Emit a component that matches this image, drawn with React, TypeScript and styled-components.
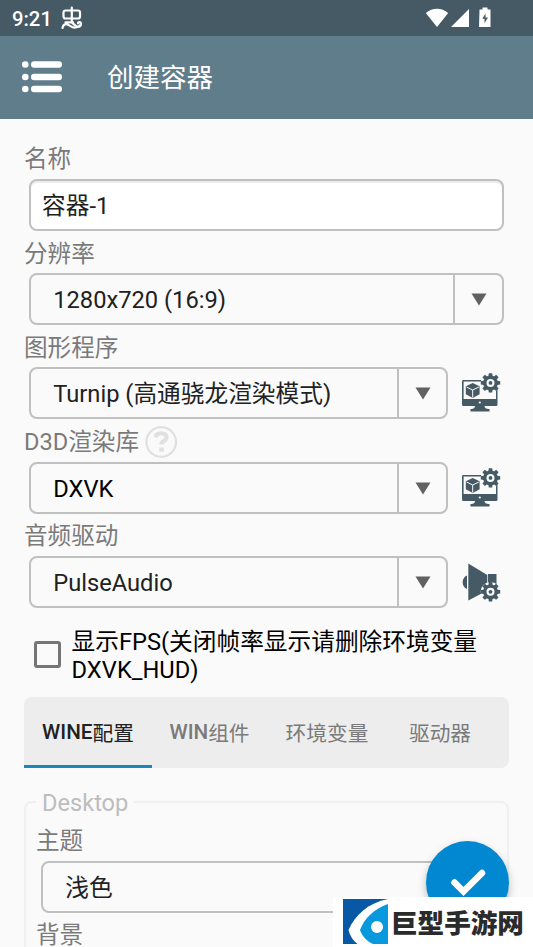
import React from "react";
import styled, { createGlobalStyle } from "styled-components";

const GlobalStyle = createGlobalStyle`
  * { box-sizing: border-box; }
  html, body { margin: 0; padding: 0; overflow: hidden; background: #fafafa; }
  body { font-family: Roboto, "Noto Sans CJK SC", sans-serif; }
`;

const Screen = styled.div`
  position: relative;
  width: 533px;
  height: 947px;
  overflow: hidden;
  background: #fafafa;
`;

const StatusBar = styled.div`
  height: 35.5px;
  padding: 0 40px 0 12px;
  display: flex;
  align-items: center;
  justify-content: space-between;
  background: #455a64;
  color: #fff;
`;

const StatusGroup = styled.div`
  display: flex;
  align-items: center;
`;

const Clock = styled.span`
  width: 49px;
  padding-top: 2px;
  font-size: 20.3px;
  font-weight: 500;
  line-height: 24px;
`;

const Header = styled.header`
  height: 83px;
  padding: 0 0 0 22px;
  display: flex;
  align-items: center;
  gap: 45px;
  background: #607d8b;
`;

const Title = styled.h1`
  margin: 0;
  padding-top: 1px;
  color: #fff;
  font-size: 26.5px;
  font-weight: 400;
  line-height: 36px;
`;

const Form = styled.main`
  padding: 26.4px 24px 0;
`;

const Field = styled.div`
  height: 94.25px;
`;

const Label = styled.div`
  height: 28px;
  display: flex;
  align-items: center;
  gap: 6px;
  padding-top: 1px;
  color: #7a7a7a;
  font-size: 23.6px;
  line-height: 28px;
`;

const ControlRow = styled.div`
  display: flex;
  align-items: center;
  margin: 6px 5px 0 4.5px;
`;

const Box = styled.div<{ $input?: boolean; $black?: boolean }>`
  flex: 1;
  height: 52px;
  display: flex;
  align-items: center;
  padding-left: ${(p) => (p.$input ? 11.5 : 22.7)}px;
  border: 2px solid #c0c0c0;
  border-radius: 8px;
  background: ${(p) => (p.$input ? "#fff" : "#fafafa")};
  box-shadow: ${(p) => (p.$input ? "inset 0 2px 0 #ececec" : "none")};
  color: ${(p) => (p.$black ? "#000" : "#212121")};
  font-size: 23.7px;
  line-height: 30px;
  white-space: nowrap;
`;

const Value = styled.span`
  flex: 1;
  padding-top: 2px;
`;

const Arrow = styled.span`
  width: 49.5px;
  align-self: stretch;
  display: flex;
  align-items: center;
  justify-content: center;
  padding: 1px 0 0 1px;
  border-left: 2px solid #c0c0c0;
`;

const IconSlot = styled.div`
  width: 56px;
  height: 52px;
  padding: 0 0 0 12.5px;
  display: flex;
  align-items: center;
`;

const CheckRow = styled.div`
  height: 80.5px;
  display: flex;
  align-items: center;
  padding: 0 0 0 10px;
  gap: 10.5px;
`;

const Checkbox = styled.span`
  width: 27px;
  height: 27px;
  flex: none;
  margin-bottom: 3px;
  border: 3px solid #757575;
  border-radius: 3px;
`;

const CheckText = styled.span`
  color: #000;
  font-size: 23.7px;
  line-height: 28px;
`;

const Tabs = styled.nav`
  height: 71px;
  display: flex;
  border-radius: 8px 8px 8px 0;
  background: #ededed;
  overflow: hidden;
`;

const Tab = styled.div<{ $w: number; $active?: boolean }>`
  width: ${(p) => p.$w}px;
  display: flex;
  align-items: center;
  justify-content: center;
  padding-top: ${(p) => (p.$active ? 3 : 0)}px;
  border-bottom: ${(p) => (p.$active ? "3px solid #1a87b9" : "none")};
  color: ${(p) => (p.$active ? "#212121" : "#7a7a7a")};
  font-size: 20.7px;
  font-weight: 500;
  white-space: nowrap;
`;

const Hanzi = styled.span`
  font-weight: 400;
`;

const Group = styled.fieldset`
  margin: 20px 0 0;
  min-width: 0;
  height: 300px;
  padding: 0 10px;
  border: 2px solid #f0f0f0;
  border-radius: 8px;
`;

const GroupBody = styled.div`
  padding-top: 11px;
`;

const Legend = styled.legend`
  padding: 2px 6px 0;
  color: #bdbdbd;
  font-size: 23.6px;
  line-height: 26px;
`;

const Fab = styled.div`
  position: absolute;
  left: 426px;
  top: 841px;
  width: 83px;
  height: 83px;
  border-radius: 50%;
  background: #0288d1;
  box-shadow: 0 4px 8px rgba(0, 0, 0, 0.25);
  display: flex;
  align-items: center;
  justify-content: center;
`;

const Watermark = styled.div`
  position: absolute;
  right: 0;
  bottom: 0;
  width: 200px;
  height: 50px;
  padding: 0 0 1px 10px;
  display: flex;
  align-items: center;
  gap: 3px;
  background: #fff;
`;

const WatermarkText = styled.span`
  color: #2b2b2b;
  font-family: "Noto Sans CJK SC", sans-serif;
  font-size: 26.6px;
  font-weight: 900;
  line-height: 44px;
  white-space: nowrap;
`;

const BugIcon = () => (
  <svg width="22" height="24" viewBox="0 0 22 24" fill="none" stroke="#fff" strokeWidth="2.2" strokeLinecap="round">
    <rect x="2.500" y="4.500" width="16.500" height="8" rx="2" />
    <path d="M10.800 1.500v13.500c0 2 1.500 3 3.500 4.500 2.500 2 5.700 1.300 5.700-1.500 0-2.500-3-2.500-3-.5" />
    <path d="M1.500 22c.5-3 2.500-4.500 5-3.500 2.500.8 4.500 3.500 8 3 3-.3 4.500-1 5.200-3M4.500 16.300h7.500" />
  </svg>
);

const StatusIcons = () => (
  <svg width="68" height="23" viewBox="0 0 68 23" fill="#fff">
    <path d="M.8 7C7.500 1.300 16.500 1.300 23.200 7L12 21Z" />
    <path d="M26 21 44 3v18Z" />
    <path d="M54.500 3.500h3V1.500h5v2h3v17.500H54Z" />
    <path d="M60.500 7.500 57.300 12.800h2.200v4.500L63 11.600h-2.500Z" fill="#455a64" />
  </svg>
);

const MenuIcon = () => (
  <svg width="40" height="32" viewBox="0 0 40 32" fill="#fff">
    {[3.5, 16, 28].map((y) => (
      <g key={y}>
        <circle cx="3.300" cy={y} r="3.300" />
        <rect x="9" y={y - 3.2} width="31" height="6.400" rx="3.200" />
      </g>
    ))}
  </svg>
);

const Triangle = () => (
  <svg width="16" height="13" viewBox="0 0 16 13">
    <path d="M.5.500h15L8 12.500Z" fill="#616161" />
  </svg>
);

const HelpIcon = () => (
  <svg width="33" height="33" viewBox="0 0 33 33" fill="none" stroke="#e0e0e0">
    <circle cx="16.200" cy="16" r="14.800" strokeWidth="2.200" />
    <path d="M11.300 11.500V9c2.500-2.300 10.200-2.500 10.200 2.200 0 4.300-5 3-5 7.300" strokeWidth="4.200" />
    <path d="M14.200 21.500h4.600v4.200h-4.600Z" fill="#e0e0e0" stroke="none" />
  </svg>
);

const teeth = [0, 45, 90, 135, 180, 225, 270, 315];

const Gear = ({ x, y }: { x: number; y: number }) => (
  <g transform={`translate(${x} ${y})`}>
    <circle r="9.800" fill="#fafafa" />
    <circle r="5.700" fill="none" stroke="#455a64" strokeWidth="3.400" />
    {teeth.map((a) => (
      <path key={a} d="M-2.100-6.500-1.700-9.700H1.700L2.100-6.500Z" fill="#455a64" transform={`rotate(${a})`} />
    ))}
    <circle r="1.900" fill="#455a64" />
  </g>
);

const DisplayIcon = () => (
  <svg width="40" height="40" viewBox="0 0 40 40">
    <path d="M3 7h33.500v24.500a1.500 1.500 0 0 1-1.500 1.500H2.500A1.500 1.500 0 0 1 1 31.500V8.500A1.500 1.500 0 0 1 3 7Z" fill="#455a64" />
    <path d="M2.600 8.600h32.400v17.400H2.600Z" fill="#fafafa" />
    <path d="M14 33h9.500c.3 2 1 3 5 3v2.500h-19V36c3.500 0 4.300-1 4.500-3Z" fill="#455a64" />
    <circle cx="18.800" cy="29.500" r="1.100" fill="#fafafa" />
    <path d="m11.700 10 6.900 3.300v8l-6.900 3.700-6.900-3.700v-8Z" fill="#455a64" />
    <path d="m5.500 14 6.200 3 6.200-3M11.700 17v7.500" fill="none" stroke="#fafafa" strokeWidth="1" />
    <Gear x={29.5} y={9.9} />
  </svg>
);

const SoundIcon = () => (
  <svg width="40" height="40" viewBox="0 0 40 40">
    <path d="M6 13.500C.2 15.500.2 25 6 27Z" fill="#455a64" />
    <path d="m7.300 1.500 19 11.500v15.500L7.300 38.500Z" fill="#455a64" />
    <path d="M27 12h8.500v10H27Z" fill="#455a64" />
    <Gear x={29.5} y={29.8} />
  </svg>
);

const SiteLogo = () => (
  <svg width="45" height="45" viewBox="0 0 45 45">
    <path d="M0 0h45v45H0Z" fill="#0759a5" />
    <path d="M45 0C25 4 12 16 5.500 31c1.500 6 4.500 10.500 9 14h30.500Z" fill="#fff" />
    <path d="M45 5C31 10 21.500 19 17 31c2 6 6.500 11 13 14h15Z" fill="#0798dd" />
    <circle cx="34" cy="28" r="6" fill="#fff" />
  </svg>
);

type SelectFieldProps = {
  label: string;
  value?: string;
  help?: boolean;
  black?: boolean;
  icon?: React.ReactNode;
};

const SelectField = ({ label, value, help, black, icon }: SelectFieldProps) => (
  <Field>
    <Label>
      {label}
      {help && <HelpIcon />}
    </Label>
    <ControlRow>
      <Box $black={black}>
        <Value>{value}</Value>
        <Arrow>
          <Triangle />
        </Arrow>
      </Box>
      {icon && <IconSlot>{icon}</IconSlot>}
    </ControlRow>
  </Field>
);

export default function App() {
  return (
    <>
      <GlobalStyle />
      <Screen>
        <StatusBar>
          <StatusGroup>
            <Clock>9:21</Clock>
            <BugIcon />
          </StatusGroup>
          <StatusIcons />
        </StatusBar>
        <Header>
          <MenuIcon />
          <Title>创建容器</Title>
        </Header>
        <Form>
          <Field>
            <Label>名称</Label>
            <ControlRow>
              <Box $input>
                <Value>容器-1</Value>
              </Box>
            </ControlRow>
          </Field>
          <SelectField label="分辨率" value="1280x720 (16:9)" />
          <SelectField label="图形程序" value="Turnip (高通骁龙渲染模式)" icon={<DisplayIcon />} />
          <SelectField label="D3D渲染库" value="DXVK" help black icon={<DisplayIcon />} />
          <SelectField label="音频驱动" value="PulseAudio" icon={<SoundIcon />} />
          <CheckRow>
            <Checkbox />
            <CheckText>
              显示FPS(关闭帧率显示请删除环境变量
              <br />
              DXVK_HUD)
            </CheckText>
          </CheckRow>
          <Tabs>
            <Tab $w={128} $active>
              WINE<Hanzi>配置</Hanzi>
            </Tab>
            <Tab $w={115}>
              WIN<Hanzi>组件</Hanzi>
            </Tab>
            <Tab $w={120}>
              <Hanzi>环境变量</Hanzi>
            </Tab>
            <Tab $w={106}>
              <Hanzi>驱动器</Hanzi>
            </Tab>
          </Tabs>
          <Group>
            <Legend>Desktop</Legend>
            <GroupBody>
              <SelectField label="主题" value="浅色" />
              <SelectField label="背景" />
            </GroupBody>
          </Group>
        </Form>
        <Fab>
          <svg width="40" height="40" viewBox="0 0 40 40" fill="none">
            <path d="m6.500 19.500 9 9L34 10" stroke="#fff" strokeWidth="6.500" strokeLinecap="round" />
          </svg>
        </Fab>
        <Watermark>
          <SiteLogo />
          <WatermarkText>巨型手游网</WatermarkText>
        </Watermark>
      </Screen>
    </>
  );
}
